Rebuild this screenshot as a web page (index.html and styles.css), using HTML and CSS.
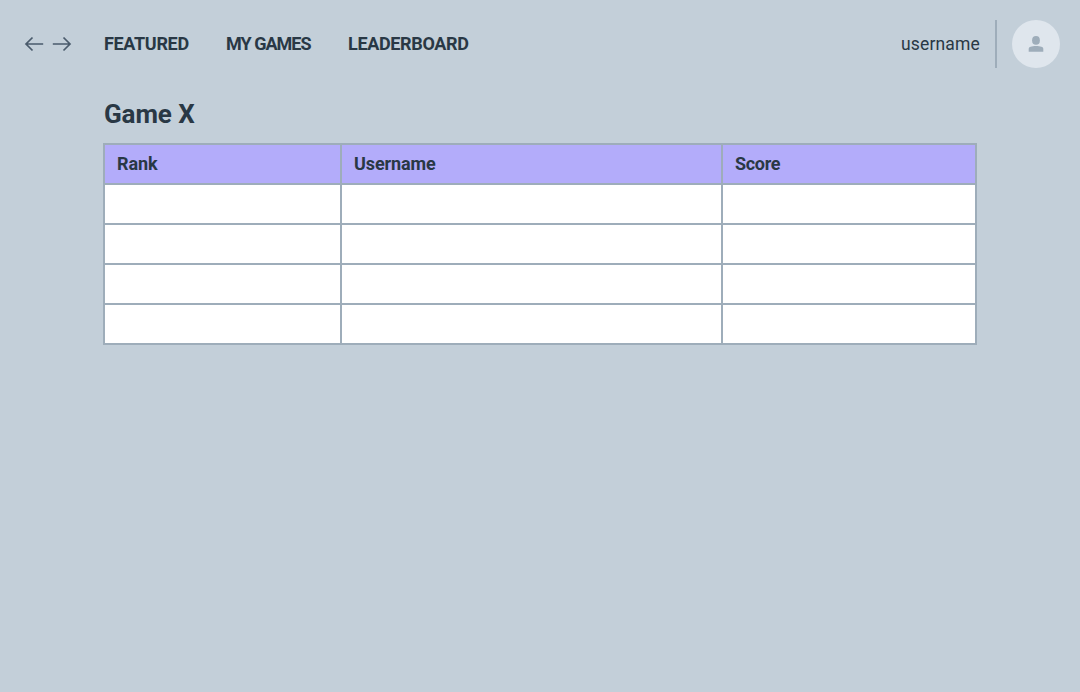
FILE: index.html
```html
<!DOCTYPE html>
<html lang="en">
<head>
<meta charset="utf-8">
<title>Leaderboard</title>
<link rel="stylesheet" href="styles.css">
</head>
<body>
<header class="topbar">
  <div class="history">
    <svg class="arrow" viewBox="0 0 20 16"><path d="M19.2 8H2M8.5 1.5L2 8L8.5 14.5"/></svg>
    <svg class="arrow" viewBox="0 0 20 16"><path d="M.8 8H18M11.5 1.5L18 8L11.5 14.5"/></svg>
  </div>
  <nav class="nav">
    <a class="link featured">FEATURED</a>
    <a class="link games">MY GAMES</a>
    <a class="link leaderboard">LEADERBOARD</a>
  </nav>
  <div class="account">
    <span class="name">username</span>
    <span class="divider"></span>
    <span class="avatar"><svg class="person" viewBox="0 0 16 16"><ellipse cx="8" cy="4.4" rx="3.9" ry="4.3"/><path d="M.7 15.8V12.9C.7 10.9 3.5 10 8 10S15.3 10.9 15.3 12.9V15.8Z"/></svg></span>
  </div>
</header>
<main class="board">
  <h1 class="title">Game X</h1>
  <div class="table">
    <div class="head rank">Rank</div><div class="head user">Username</div><div class="head score">Score</div>
    <div class="cell"></div><div class="cell"></div><div class="cell"></div>
    <div class="cell"></div><div class="cell"></div><div class="cell"></div>
    <div class="cell"></div><div class="cell"></div><div class="cell"></div>
    <div class="cell"></div><div class="cell"></div><div class="cell"></div>
  </div>
</main>
</body>
</html>
```
FILE: styles.css
```css
* { box-sizing: border-box; }
body {
  margin: 0;
  min-height: 100vh;
  background: #c3cfd9;
  color: #293845;
  font-family: Roboto, "Liberation Sans", sans-serif;
  font-size: 18px;
}
.topbar { display: flex; align-items: center; height: 88px; padding: 0 20px 0 24px; }
.history { display: flex; gap: 8px; width: 80px; }
.arrow { width: 20px; height: 16px; fill: none; stroke: #4a5b6c; stroke-width: 1.7; }
.nav { display: flex; font-weight: 700; line-height: 24px; }
.link { white-space: nowrap; }
.featured { width: 122px; letter-spacing: -0.33px; }
.games { width: 122px; letter-spacing: -0.98px; }
.leaderboard { letter-spacing: -0.34px; }
.account { display: flex; align-items: center; margin-left: auto; }
.name { width: 79px; white-space: nowrap; line-height: 24px; font-size: 17.5px; letter-spacing: 0.15px; }
.divider { width: 2px; height: 48px; margin: 0 15px; background: #9eadba; }
.avatar { display: grid; place-items: center; width: 48px; height: 48px; border-radius: 50%; background: #dfe6ed; }
.person { width: 16px; height: 16px; fill: #9eadba; }
.board { width: 874px; margin-left: 103px; }
.title { margin: 0; padding: 10px 0 13px 1px; font-size: 26px; font-weight: 700; line-height: 32px; letter-spacing: -0.1px; }
.table {
  display: grid;
  grid-template-columns: 235px 379px 252px;
  grid-auto-rows: 38px;
  gap: 2px;
  padding: 2px;
  background: #9eadba;
}
.head { padding: 0 12px; background: #b3acfa; font-weight: 700; line-height: 38px; letter-spacing: -0.1px; }
.score { letter-spacing: -0.3px; }
.cell { background: #fff; }
```
